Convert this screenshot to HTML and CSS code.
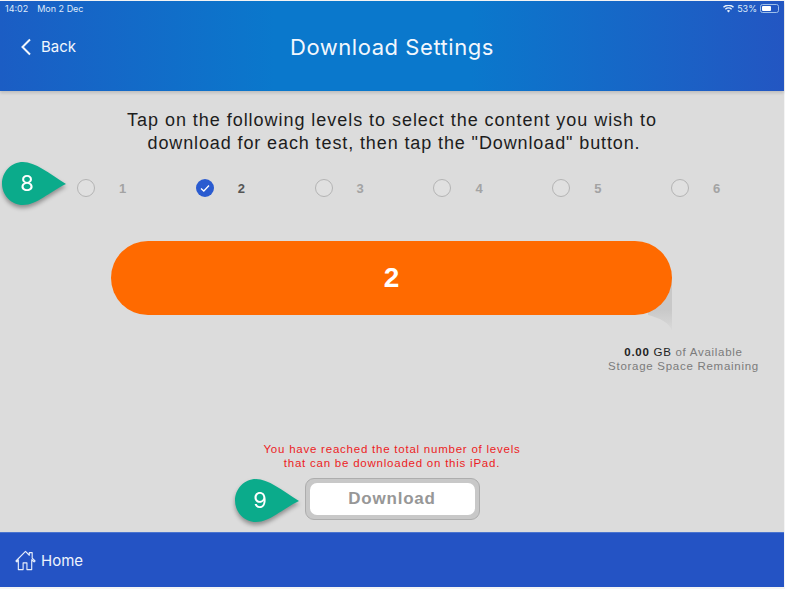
FILE: index.html
```html
<!DOCTYPE html>
<html lang="en">
<head>
<meta charset="utf-8">
<title>Download Settings</title>
<link rel="stylesheet" href="styles.css">
</head>
<body>
<div class="screen">
  <header class="header">
    <div class="status">
      <div class="status-left"><span>14:02</span><span>Mon 2 Dec</span></div>
      <div class="status-right">
        <svg class="wifi" viewBox="0 0 14 10" width="11" height="8"><path d="M7 9.600 4.900 7.300a3 3 0 0 1 4.200 0zM3.600 6 2.400 4.700a6.700 6.700 0 0 1 9.200 0L10.400 6a5 5 0 0 0-6.800 0zM1.200 3.400 0 2.100a10.200 10.200 0 0 1 14 0l-1.200 1.300a8.400 8.400 0 0 0-11.600 0z" fill="#e8f1fb"/></svg>
        <span>53%</span>
        <span class="battery"><span class="battery-fill"></span></span>
      </div>
    </div>
    <div class="titlebar">
      <div class="back">
        <svg viewBox="0 0 12 18" width="12" height="18"><path d="M10 1.500 2.500 9l7.500 7.500" fill="none" stroke="#f2f7fd" stroke-width="2"/></svg>
        <span>Back</span>
      </div>
      <h1 class="title">Download Settings</h1>
    </div>
  </header>

  <main class="content">
    <p class="intro">Tap on the following levels to select the content you wish to<br><span class="intro-second">download for each test, then tap the "Download" button.</span></p>

    <div class="levels">
      <div class="level"><span class="radio"></span><span class="num">1</span></div>
      <div class="level on"><span class="radio checked"><svg viewBox="0 0 18 18" width="18" height="18"><path d="M5 9.500 7.800 12 13 6.500" fill="none" stroke="#fff" stroke-width="1.300"/></svg></span><span class="num">2</span></div>
      <div class="level"><span class="radio"></span><span class="num">3</span></div>
      <div class="level"><span class="radio"></span><span class="num">4</span></div>
      <div class="level"><span class="radio"></span><span class="num">5</span></div>
      <div class="level"><span class="radio"></span><span class="num">6</span></div>
    </div>

    <div class="pill-wrap">
      <div class="pill">2</div>
      <svg class="curl" viewBox="0 0 24 54" width="24" height="54">
        <defs><linearGradient id="curlfade" x1="0" y1="0" x2="0" y2="1"><stop offset="0.6" stop-color="#c8c8c8"/><stop offset="1" stop-color="#dadada"/></linearGradient></defs>
        <path d="M24 0V54C22 46 12 41 0 38V20Z" fill="url(#curlfade)"/>
      </svg>
    </div>

    <div class="storage"><b>0.00</b> <span class="gb">GB</span> of Available<br>Storage Space Remaining</div>

    <p class="warning">You have reached the total number of levels<br>that can be downloaded on this iPad.</p>

    <div class="download-frame"><button class="download" type="button">Download</button></div>
  </main>

  <footer class="footer">
    <svg viewBox="0 0 22 22" width="21" height="21"><path d="M1 11.500 11 1.500l4 4V2.800h3v5.700l3 3-1 1-2.500-2.300V20.500h-5v-7H8.500v7h-5V10.200L2 12.500z" fill="none" stroke="#e6edfa" stroke-width="1.200" stroke-linejoin="round"/></svg>
    <span>Home</span>
  </footer>

  <div class="callout callout-8">
    <svg viewBox="0 0 66 44" width="66" height="44"><path d="M22 1C34 1 48 12 65 23 48 31 36 44 22 44 10 44 1 34 1 22.500 1 11 10 1 22 1Z" fill="#0bab8b"/></svg>
    <span>8</span>
  </div>
  <div class="callout callout-9">
    <svg viewBox="0 0 66 44" width="66" height="44"><path d="M22 1C34 1 48 12 65 23 48 31 36 44 22 44 10 44 1 34 1 22.500 1 11 10 1 22 1Z" fill="#0bab8b"/></svg>
    <span>9</span>
  </div>
</div>
</body>
</html>
```

FILE: styles.css
```css
* { box-sizing: border-box; }
html, body { margin: 0; padding: 0; background: #f4f4f4; }
body { width: 785px; height: 589px; overflow: hidden; font-family: "Liberation Sans", Arial, sans-serif; }

.screen { position: relative; width: 784px; height: 586px; margin-top: 1px; display: flex; flex-direction: column; background: #dcdcdc; }

.header { height: 90px; flex: none; color: #f2f7fd; background: linear-gradient(90deg, #1b5dc4 0%, #0a78cc 35%, #0a78cc 60%, #2356c2 100%); box-shadow: 0 2px 3px rgba(0,0,0,.14); padding: 0 5px; }
.status { display: flex; justify-content: space-between; align-items: center; height: 15px; font-size: 9px; color: #dfeafa; font-family: "Inter", "Liberation Sans", sans-serif; }
.status-left { display: flex; gap: 9px; }
.status-right { display: flex; align-items: center; gap: 3px; }
.battery { width: 19px; height: 9px; border: 1px solid #9fc0ea; border-radius: 2.500px; padding: 1px; display: block; }
.battery-fill { display: block; width: 9px; height: 5px; background: #fff; border-radius: 1px; }

.titlebar { position: relative; display: flex; align-items: center; justify-content: center; height: 45px; margin-top: 8px; }
.title { margin: 0; font-size: 22px; font-weight: 400; letter-spacing: .55px; font-family: "Inter", "Liberation Sans", sans-serif; }
.back { position: absolute; left: 15px; top: 13px; display: flex; align-items: center; gap: 9px; font-size: 15px; font-family: "Inter", "Liberation Sans", sans-serif; }

.content { flex: 1; display: flex; flex-direction: column; align-items: center; min-height: 0; }
.intro { margin: 18px 0 0; text-align: center; font-size: 18px; line-height: 23px; letter-spacing: .96px; color: #1d1d1d; }
.intro-second { letter-spacing: .89px; padding-left: 4px; }

.levels { display: flex; align-self: flex-start; margin: 21px 0 0 77px; height: 24px; }
.level { width: 118.800px; display: flex; align-items: center; gap: 24px; color: #a3a3a3; font-size: 13px; font-weight: 700; }
.level.on { color: #555; }
.radio { width: 18px; height: 18px; border-radius: 50%; border: 1.500px solid #b4b4b4; background: #e0e0e0; display: block; }
.radio.checked { border: 0; background: #2a5bd0; }
.radio.checked svg { display: block; }

.pill-wrap { position: relative; align-self: flex-start; width: 561px; height: 74px; margin: 41px 0 0 111px; }
.pill { height: 74px; border-radius: 37px; background: #ff6a00; color: #fff; font-size: 28px; font-weight: 700; display: flex; align-items: center; justify-content: center; position: relative; z-index: 1; }
.curl { position: absolute; right: 0; top: 36px; }

.storage { align-self: flex-end; width: 175px; margin: 30px 13px 0 0; text-align: center; font-size: 11.500px; line-height: 14px; letter-spacing: .72px; color: #7b7b7b; }
.storage b, .storage .gb { color: #222; }

.warning { margin: 69px 0 0; text-align: center; font-size: 11.500px; line-height: 14px; letter-spacing: .77px; color: #ec1c24; }

.download-frame { margin-top: 8px; width: 175px; height: 42px; padding: 4px; border-radius: 9px; background: #c8c8c8; border: 1px solid #adadad; }
.download { display: block; width: 100%; height: 100%; padding: 0; border: 0; border-radius: 7px; background: #fff; color: #979797; font: 700 17px "Liberation Sans", Arial, sans-serif; letter-spacing: .8px; }

.footer { height: 55px; flex: none; display: flex; align-items: center; gap: 5px; padding: 0 15px; color: #eef3fc; font-size: 15px; background: #2453c4; border-top: 1px solid #4a74cf; font-family: "Inter", "Liberation Sans", sans-serif; }

.callout { position: absolute; width: 66px; height: 44px; filter: drop-shadow(0 3px 2px rgba(0,0,0,.35)); }
.callout svg { display: block; }
.callout span { position: absolute; left: 0; top: 0; width: 52px; height: 44px; display: flex; align-items: center; justify-content: center; color: #fff; font-size: 22px; font-family: "Inter", "Liberation Sans", sans-serif; }
.callout-8 { left: 1px; top: 160px; }
.callout-9 { left: 234px; top: 477px; }
```
